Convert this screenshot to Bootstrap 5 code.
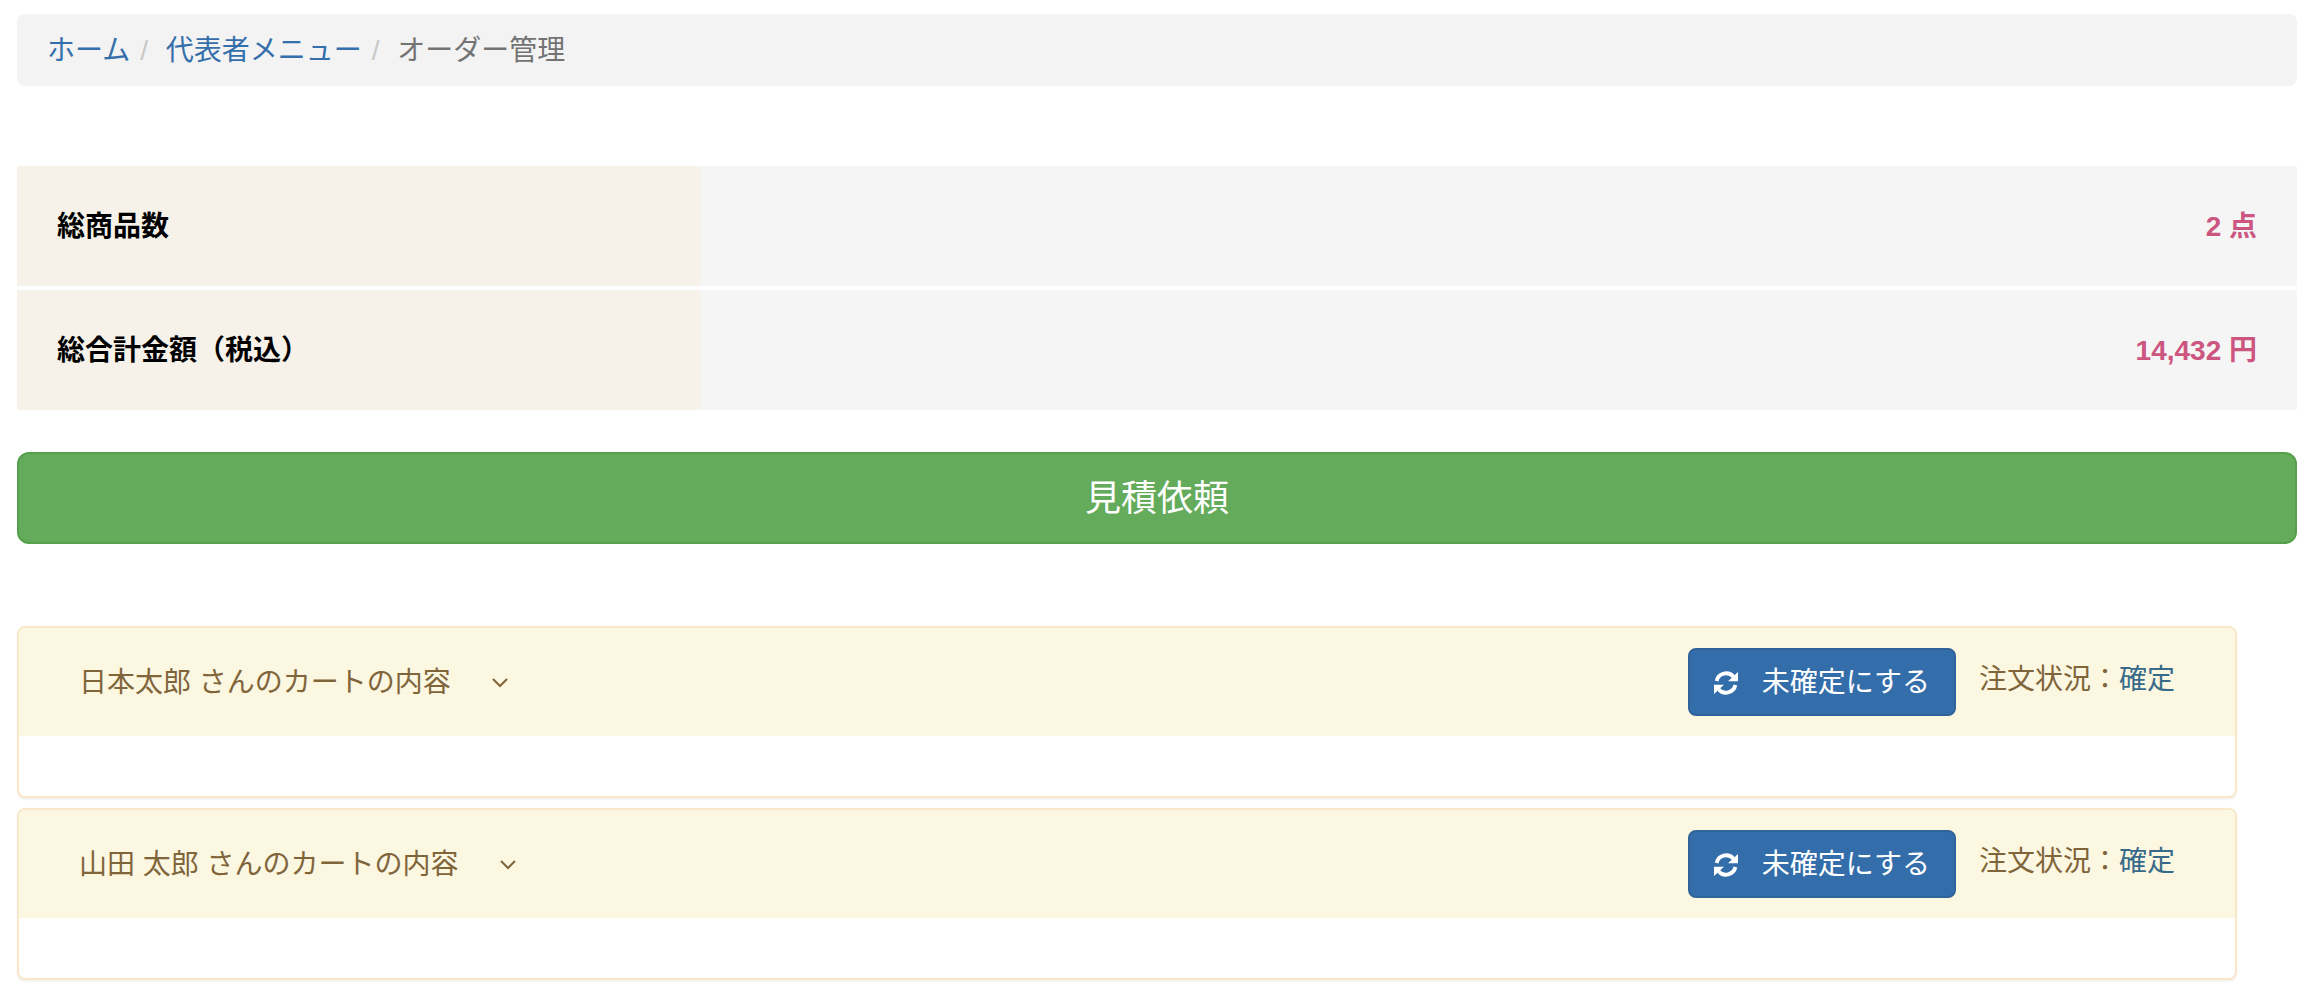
<!DOCTYPE html>
<html lang="ja">
<head>
<meta charset="utf-8">
<meta name="viewport" content="width=device-width, initial-scale=1">
<title>オーダー管理</title>
<link href="https://cdn.jsdelivr.net/npm/bootstrap@5.3.0/dist/css/bootstrap.min.css" rel="stylesheet">
<style>
body { font-family: "Liberation Sans", "Noto Sans CJK JP", sans-serif; font-size: 28px; line-height: 40px; color: #333; background: #fff; }
.page { padding: 14px 21px 14px 17px; }
.page a { text-decoration: none; }
.breadcrumb { --bs-breadcrumb-font-size: 28px; background: #f3f3f3; border-radius: 8px; padding: 17px 30px 15px; margin-bottom: 76px; }
.breadcrumb a { color: #346fab; }
.breadcrumb-item + .breadcrumb-item { padding-left: 10px; }
.breadcrumb-item + .breadcrumb-item::before { content: "/\00a0"; color: #c8c8c8; padding-right: 10px; }
.breadcrumb-item.active { color: #737373; }
.totals { width: 100%; border-collapse: separate; border-spacing: 0 4px; margin-bottom: 38px; }
.totals th, .totals td { height: 120px; padding: 2px 40px 0; font-weight: 700; vertical-align: middle; }
.totals th { width: 30%; background: #f6f1e9; color: #000; }
.totals td { background: #f5f5f5; color: #cc5680; text-align: right; }
.btn-quote { --bs-btn-color: #fff; --bs-btn-bg: #64ab5c; --bs-btn-border-color: #56a04b; --bs-btn-hover-color: #fff; --bs-btn-hover-bg: #56a04b; --bs-btn-hover-border-color: #4a8c41; --bs-btn-font-size: 36px; --bs-btn-line-height: 48px; --bs-btn-border-width: 2px; --bs-btn-border-radius: 12px; padding: 21px 32px 19px; margin-bottom: 82px; }
.carts { padding-right: 60px; gap: 10px; }
.cart-card { --bs-card-border-color: #f8e7c9; --bs-card-border-width: 2px; --bs-card-border-radius: 8px; --bs-card-inner-border-radius: 6px; box-shadow: 0 2px 2px rgba(0, 0, 0, .05); }
.cart-card .card-header { background: #fcf7e1; color: #80653b; padding: 20px 60px; border: 0; }
.cart-card .card-body { padding: 30px; }
.cart-toggle { color: inherit; gap: 40px; padding-top: 2px; }
.btn-status { --bs-btn-color: #fff; --bs-btn-bg: #346eaa; --bs-btn-border-color: #30639a; --bs-btn-hover-color: #fff; --bs-btn-hover-bg: #30639a; --bs-btn-hover-border-color: #264f7c; --bs-btn-font-size: 28px; --bs-btn-line-height: 40px; --bs-btn-border-width: 2px; --bs-btn-border-radius: 8px; padding: 13px 24px 11px; gap: 24px; }
.cart-actions { gap: 23px; }
.order-state { padding-bottom: 4px; }
.state-fixed { color: #386b8a; }
</style>
</head>
<body>
<svg class="d-none" aria-hidden="true">
  <symbol id="icon-refresh" viewBox="0 0 24 24">
    <path d="M2.600 10A9.700 9.700 0 0 1 19.500 5.800M21.400 14A9.700 9.700 0 0 1 4.500 18.200" fill="none" stroke="currentColor" stroke-width="3.800"/>
    <path d="M24 1v9.300H14zM0 23V13.700h10z" fill="currentColor"/>
  </symbol>
  <symbol id="icon-chevron" viewBox="0 0 18 12">
    <path d="M2 2l7 7 7-7" fill="none" stroke="currentColor" stroke-width="2"/>
  </symbol>
</svg>
<main class="page">
  <nav aria-label="breadcrumb">
    <ol class="breadcrumb">
      <li class="breadcrumb-item"><a href="#">ホーム</a></li>
      <li class="breadcrumb-item"><a href="#">代表者メニュー</a></li>
      <li class="breadcrumb-item active" aria-current="page">オーダー管理</li>
    </ol>
  </nav>

  <table class="totals">
    <tbody>
      <tr><th scope="row">総商品数</th><td>2 点</td></tr>
      <tr><th scope="row">総合計金額（税込）</th><td>14,432 円</td></tr>
    </tbody>
  </table>

  <button type="button" class="btn btn-quote d-block w-100">見積依頼</button>

  <section class="carts d-flex flex-column">
    <article class="card cart-card">
      <div class="card-header d-flex justify-content-between align-items-center">
        <a class="cart-toggle d-flex align-items-center" href="#cart1">日本太郎 さんのカートの内容
          <svg width="18" height="12" aria-hidden="true"><use href="#icon-chevron"/></svg>
        </a>
        <div class="cart-actions d-flex align-items-center">
          <button type="button" class="btn btn-status d-flex align-items-center">
            <svg width="24" height="24" aria-hidden="true"><use href="#icon-refresh"/></svg>
            未確定にする
          </button>
          <div class="order-state">注文状況：<span class="state-fixed">確定</span></div>
        </div>
      </div>
      <div class="card-body" id="cart1"></div>
    </article>

    <article class="card cart-card">
      <div class="card-header d-flex justify-content-between align-items-center">
        <a class="cart-toggle d-flex align-items-center" href="#cart2">山田 太郎 さんのカートの内容
          <svg width="18" height="12" aria-hidden="true"><use href="#icon-chevron"/></svg>
        </a>
        <div class="cart-actions d-flex align-items-center">
          <button type="button" class="btn btn-status d-flex align-items-center">
            <svg width="24" height="24" aria-hidden="true"><use href="#icon-refresh"/></svg>
            未確定にする
          </button>
          <div class="order-state">注文状況：<span class="state-fixed">確定</span></div>
        </div>
      </div>
      <div class="card-body" id="cart2"></div>
    </article>
  </section>
</main>
<script src="https://cdn.jsdelivr.net/npm/bootstrap@5.3.0/dist/js/bootstrap.bundle.min.js"></script>
</body>
</html>
